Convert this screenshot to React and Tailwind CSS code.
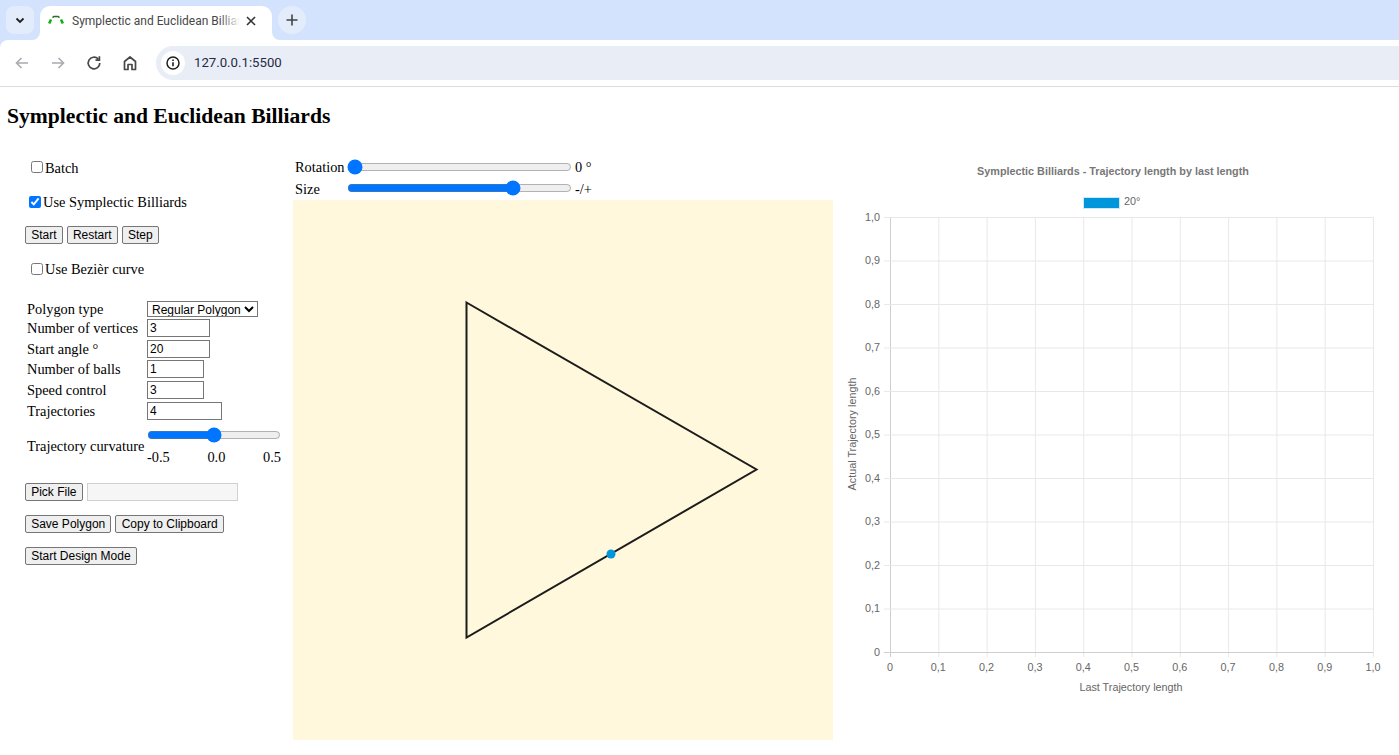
import React from "react";

const times = "font-['Liberation_Serif','Times_New_Roman',serif]";
const btn = "h-[18px] px-[5.2px] border border-[#767676] rounded-[2px] bg-[#efefef] text-black text-[12px] leading-none font-['Liberation_Sans',Arial,sans-serif] whitespace-nowrap";
const field = "h-[18px] border border-[#767676] bg-white pl-[2px] text-[12px] leading-none text-black font-['Liberation_Sans',Arial,sans-serif]";

function Tabs() {
  return (
    <div className="h-10 bg-[#d3e3fd] flex items-end pl-[6px]">
      <div className="w-7 h-7 mb-[6px] rounded-lg bg-[#e3ecfb] flex items-center justify-center">
        <svg width="12" height="12" viewBox="0 0 12 12"><path d="M2.5 4.5 6 8l3.5-3.5" fill="none" stroke="#1f1f1f" strokeWidth="1.8" /></svg>
      </div>
      <div className="relative ml-[6px] w-[232px] h-[34px] bg-white rounded-t-[10px] flex items-center pl-2 pr-2 pb-1">
        <div className="absolute -left-2 bottom-0 w-2 h-2 bg-white"><div className="w-2 h-2 bg-[#d3e3fd] rounded-br-lg" /></div>
        <div className="absolute -right-2 bottom-0 w-2 h-2 bg-white"><div className="w-2 h-2 bg-[#d3e3fd] rounded-bl-lg" /></div>
        <svg width="16" height="16" viewBox="0 0 16 16" className="shrink-0">
          <path d="M1.2 10.5 3 6.5" stroke="#10b010" strokeWidth="2.6" fill="none" />
          <path d="M4.5 4.6 6 3.4H10L11.5 4.6" stroke="#2a6a2a" strokeWidth="1.5" fill="none" />
          <path d="M13 6.5 14.8 10.5" stroke="#10b010" strokeWidth="2.6" fill="none" />
        </svg>
        <div className="relative ml-2 w-[168px] overflow-hidden whitespace-nowrap text-[12px] text-[#474747] font-['Roboto','Noto_Sans',sans-serif]">
          Symplectic and Euclidean Billiards
          <div className="absolute right-0 top-0 bottom-0 w-5 bg-gradient-to-r from-transparent to-white" />
        </div>
        <svg width="12" height="12" viewBox="0 0 12 12" className="ml-[5px]"><path d="M2 2l8 8M10 2l-8 8" stroke="#333" strokeWidth="1.6" /></svg>
      </div>
      <div className="ml-[6px] mb-[6px] w-7 h-7 rounded-full bg-[#e3ecfb] flex items-center justify-center">
        <svg width="14" height="14" viewBox="0 0 14 14"><path d="M7 1.5v11M1.5 7h11" stroke="#444" strokeWidth="1.6" /></svg>
      </div>
    </div>
  );
}

function Toolbar() {
  return (
    <div className="h-[47px] bg-[#d3e3fd]">
      <div className="h-full bg-white rounded-tl-lg border-b border-[#dadce0] flex items-start pt-[6px]">
        <div className="w-[156px] h-[34px] flex items-center pl-[14px]">
          <svg width="16" height="16" viewBox="0 0 16 16"><path d="M14 8H3M7.5 3 2.5 8l5 5" fill="none" stroke="#a9abaf" strokeWidth="1.6" /></svg>
          <svg width="16" height="16" viewBox="0 0 16 16" className="ml-[20px]"><path d="M2 8h11M8.5 3l5 5-5 5" fill="none" stroke="#a9abaf" strokeWidth="1.6" /></svg>
          <svg width="16" height="16" viewBox="0 0 16 16" className="ml-[20px]"><path d="M13.8 8a5.8 5.8 0 1 1-1.7-4.1M13.4 1.2v3.9H9.5" fill="none" stroke="#474747" strokeWidth="1.7" /></svg>
          <svg width="16" height="16" viewBox="0 0 16 16" className="ml-[20px]"><path d="M2.5 14.5V6.5L8 2l5.5 4.5v8H10V9.5H6v5Z" fill="none" stroke="#474747" strokeWidth="1.7" strokeLinejoin="round" /></svg>
        </div>
        <div className="flex-1 h-[34px] bg-[#e9eef6] rounded-l-[17px] flex items-center pl-[5px]">
          <div className="w-6 h-6 rounded-full bg-white flex items-center justify-center">
            <svg width="16" height="16" viewBox="0 0 16 16"><circle cx="8" cy="8" r="6" fill="none" stroke="#1f1f1f" strokeWidth="1.5" /><path d="M8 7.2v4M8 4.4v1.6" stroke="#1f1f1f" strokeWidth="1.6" /></svg>
          </div>
          <span className="ml-[9px] text-[13.2px] text-[#1f2a44] font-['Roboto','Noto_Sans',sans-serif]">127.0.0.1:5500</span>
        </div>
      </div>
    </div>
  );
}

function Row({ label, w, value }) {
  return (
    <div className="flex items-center h-[20.6px]">
      <span className="w-[120px] shrink-0">{label}</span>
      <input readOnly value={value} className={field} style={{ width: w, height: 18 }} />
    </div>
  );
}

function LeftPanel() {
  return (
    <div className={`w-[293px] shrink-0 text-[14.4px] leading-[16px] text-black ${times}`}>
      <label className="flex items-center h-4 mt-[9px] pl-[31px] gap-[2px]">
        <input type="checkbox" className="w-[12px] h-[12px] m-0 -mt-[2px]" />Batch
      </label>
      <label className="flex items-center h-4 mt-[18px] pl-[29px] gap-[2px]">
        <input type="checkbox" defaultChecked className="w-[12px] h-[12px] m-0" />Use Symplectic Billiards
      </label>
      <div className="flex gap-1 pl-[25px] mt-[16px]">
        <button className={btn}>Start</button>
        <button className={btn}>Restart</button>
        <button className={btn}>Step</button>
      </div>
      <label className="flex items-center h-4 mt-[17px] pl-[31px] gap-[2px]">
        <input type="checkbox" className="w-[12px] h-[12px] m-0" />Use Bezièr curve
      </label>
      <div className="pl-[27px] mt-[22px]">
        <div className="flex items-center h-[19px]">
          <span className="w-[120px] shrink-0">Polygon type</span>
          <select defaultValue="Regular Polygon" className="w-[111px] h-[16px] border border-[#767676] bg-white text-[12px] leading-none font-['Liberation_Sans',Arial,sans-serif]">
            <option>Regular Polygon</option>
          </select>
        </div>
        <Row label="Number of vertices" w={63} value="3" />
        <Row label="Start angle °" w={63} value="20" />
        <Row label="Number of balls" w={57} value="1" />
        <Row label="Speed control" w={57} value="3" />
        <Row label="Trajectories" w={75} value="4" />
        <div className="flex items-center mt-[6px]">
          <span className="w-[120px] shrink-0 whitespace-nowrap">Trajectory curvature</span>
          <div className="w-[134px]">
            <input type="range" min="0" max="100" defaultValue="50" className="block w-[134px] h-4 m-0" />
            <div className="flex justify-between mt-[6px]"><span>-0.5</span><span>0.0</span><span>0.5</span></div>
          </div>
        </div>
      </div>
      <div className="flex gap-1 pl-[25px] mt-[18px]">
        <button className={btn}>Pick File</button>
        <div className="w-[151px] h-[18px] border border-[#d0d0d0] bg-[#f6f6f6]" />
      </div>
      <div className="flex gap-1 pl-[25px] mt-[14px]">
        <button className={btn}>Save Polygon</button>
        <button className={btn}>Copy to Clipboard</button>
      </div>
      <div className="pl-[25px] mt-[14px]">
        <button className={btn}>Start Design Mode</button>
      </div>
    </div>
  );
}

function CenterPanel() {
  return (
    <div className={`w-[540px] shrink-0 text-[14.4px] leading-[16px] text-black ${times}`}>
      <div className="flex items-center h-[22px] pl-[2px] mt-[5px]">
        <span className="w-[52px] shrink-0">Rotation</span>
        <input type="range" min="0" max="100" defaultValue="0" className="block w-[225px] h-4 m-0 -mt-[1px]" />
        <span className="ml-[3px]">0 °</span>
      </div>
      <div className="flex items-center h-[22px] pl-[2px]">
        <span className="w-[52px] shrink-0">Size</span>
        <input type="range" min="0" max="100" step="0.5" defaultValue="75.5" className="block w-[225px] h-4 m-0 -mt-[2px]" />
        <span className="ml-[3px]">-/+</span>
      </div>
      <div className="w-[540px] h-[540px] bg-[#fff8dc]">
        <svg width="540" height="540" viewBox="0 0 540 540" className="block">
          <path d="M173.5 102.5 463.5 269.5 173.5 437.5Z" fill="none" stroke="#1c1c1c" strokeWidth="2" />
          <circle cx="318" cy="354" r="4.5" fill="#0096dc" />
        </svg>
      </div>
    </div>
  );
}

function Chart() {
  const xs = Array.from({ length: 11 }, (_, i) => 57 + i * 48.3);
  const ys = Array.from({ length: 11 }, (_, i) => 66 + i * 43.5);
  const lab = (i) => (i === 0 ? "0" : i === 10 ? "1,0" : `0,${i}`);
  const font = { fontFamily: "'Liberation Sans', Arial, sans-serif" };
  return (
    <div className="flex-1 min-w-0">
      <svg width="566" height="590" viewBox="0 0 566 590" className="block" style={font}>
        <text x="280" y="24" textAnchor="middle" fontSize="10.8" fontWeight="700" fill="#777">Symplectic Billiards - Trajectory length by last length</text>
        <rect x="250.5" y="46.5" width="36" height="11" fill="#0096dc" stroke="#cfeaf7" />
        <text x="291" y="54" fontSize="10.8" fill="#666">20°</text>
        {xs.map((x, i) => (
          <line key={i} x1={x + 0.5} x2={x + 0.5} y1="66" y2="506" stroke={i === 0 ? "#cfcfcf" : "#e8e8e8"} />
        ))}
        {ys.map((y, i) => (
          <line key={i} x1="51" x2="540" y1={y + 0.5} y2={y + 0.5} stroke={i === 10 ? "#cfcfcf" : "#e8e8e8"} />
        ))}
        {ys.map((y, i) => (
          <text key={i} x="47" y={y + 3.5} textAnchor="end" fontSize="10.8" fill="#666">{lab(10 - i)}</text>
        ))}
        {xs.map((x, i) => (
          <text key={i} x={x} y="520" textAnchor="middle" fontSize="10.8" fill="#666">{lab(i)}</text>
        ))}
        <text x="298" y="540" textAnchor="middle" fontSize="10.8" fill="#666">Last Trajectory length</text>
        <text transform="translate(23 283) rotate(-90)" textAnchor="middle" fontSize="10.8" fill="#666">Actual Trajectory length</text>
      </svg>
    </div>
  );
}

export default function App() {
  return (
    <div className="w-[1399px] h-[755px] overflow-hidden bg-white">
      <Tabs />
      <Toolbar />
      <h2 className={`pl-[7px] mt-[17px] text-[21.6px] leading-[24px] font-bold text-black ${times}`}>Symplectic and Euclidean Billiards</h2>
      <div className="flex mt-[23px]">
        <LeftPanel />
        <CenterPanel />
        <Chart />
      </div>
    </div>
  );
}
